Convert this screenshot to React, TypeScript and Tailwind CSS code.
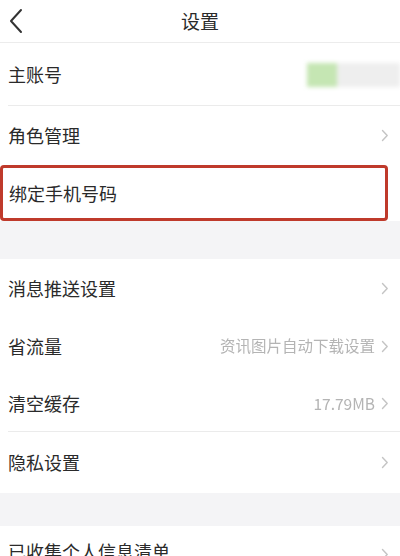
import React from "react";

const font = { fontFamily: '"Noto Sans CJK SC", "Noto Sans", sans-serif' };

function Chevron() {
  return (
    <svg width="8" height="13" viewBox="0 0 8 13" className="shrink-0">
      <path d="M1.5 1.5 L6.2 6.5 L1.5 11.5" fill="none" stroke="#c4c4c4" strokeWidth="1.4" strokeLinecap="round" strokeLinejoin="round" />
    </svg>
  );
}

function Row({ label, right, chevron = true, h, border = false }: { label: string; right?: string; chevron?: boolean; h: string; border?: boolean }) {
  return (
    <div className={`relative flex items-center justify-between pl-2 pr-[11px] bg-white ${h}`}>
      <span className="text-[18px] text-[#2a2a2a]">{label}</span>
      <div className="flex items-center gap-[6px]">
        {right && <span className="text-[15.5px] text-[#b4b4b4] blur-[0.4px]">{right}</span>}
        {chevron && <Chevron />}
      </div>
      {border && <div className="absolute left-2 right-0 bottom-0 h-px bg-[#ebebeb]" />}
    </div>
  );
}

export default function App() {
  return (
    <div className="w-[400px] h-[556px] overflow-hidden bg-white" style={font}>
      <div className="relative flex items-center justify-center h-[43px] border-b border-[#ececec]">
        <svg className="absolute left-[8px] top-[8px]" width="16" height="26" viewBox="0 0 16 26">
          <path d="M13 2 L3 13 L13 24" fill="none" stroke="#333" strokeWidth="2" strokeLinecap="round" strokeLinejoin="round" />
        </svg>
        <span className="text-[19px] text-[#2a2a2a]">设置</span>
      </div>
      <div className="relative flex items-center justify-between pl-2 h-[63px] bg-white">
        <span className="text-[18px] text-[#2a2a2a]">主账号</span>
        <div className="flex h-[24px] w-[93px] blur-[2px]">
          <div className="w-[30px] bg-[#c5e6b3]" />
          <div className="flex-1 bg-[#eeeeee]" />
        </div>
        <div className="absolute left-2 right-0 bottom-0 h-px bg-[#ebebeb]" />
      </div>
      <Row label="角色管理" h="h-[59px]" />
      <div className="h-[56px] bg-white pr-[12px]">
        <div className="h-full flex items-center pl-[6px] border-[3px] border-[#bf3a2b] rounded-[4px]">
          <span className="text-[18px] text-[#2a2a2a]">绑定手机号码</span>
        </div>
      </div>
      <div className="h-[38px] bg-[#f4f4f6]" />
      <Row label="消息推送设置" h="h-[58px]" />
      <Row label="省流量" right="资讯图片自动下载设置" h="h-[58px]" />
      <Row label="清空缓存" right="17.79MB" h="h-[57px]" border />
      <Row label="隐私设置" h="h-[61px]" />
      <div className="h-[33px] bg-[#f4f4f6]" />
      <div className="relative flex items-start justify-between pl-2 pr-[11px] pt-[12px] h-[60px] bg-white">
        <span className="text-[18px] text-[#2a2a2a]">已收集个人信息清单</span>
        <div className="pt-[10px]"><Chevron /></div>
      </div>
    </div>
  );
}
